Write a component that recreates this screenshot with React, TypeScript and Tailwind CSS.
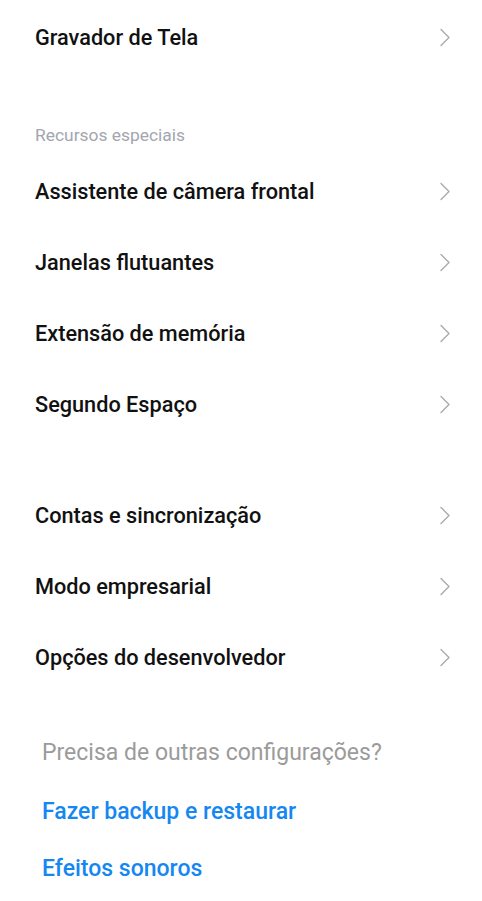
import React from 'react';

const Chevron: React.FC = () => (
  <svg width="12" height="19" viewBox="0 0 12 19" fill="none" className="shrink-0">
    <path d="M2 1.5 L10 9.5 L2 17.5" stroke="#ababab" strokeWidth="1.4" strokeLinecap="round" strokeLinejoin="round" />
  </svg>
);

const Row: React.FC<{ label: string }> = ({ label }) => (
  <div className="flex items-center justify-between h-[71px] pl-[35px] pr-[31px]">
    <span className="text-[21.7px] leading-[28px] font-medium text-[#111]">{label}</span>
    <Chevron />
  </div>
);

const App: React.FC = () => {
  return (
    <div
      className="w-[482px] h-[901px] bg-white overflow-hidden"
      style={{ fontFamily: 'Roboto, "Noto Sans", sans-serif' }}
    >
      <div className="pt-[2px]">
        <Row label="Gravador de Tela" />
      </div>

      <div className="pt-[51px] pl-[35px] h-[83px]">
        <span className="block text-[17.4px] leading-[22px] text-[#a3a5b0]">Recursos especiais</span>
      </div>

      <Row label="Assistente de câmera frontal" />
      <Row label="Janelas flutuantes" />
      <Row label="Extensão de memória" />
      <Row label="Segundo Espaço" />

      <div className="h-[40px]" />

      <Row label="Contas e sincronização" />
      <Row label="Modo empresarial" />
      <Row label="Opções do desenvolvedor" />

      <div className="pl-[42px] pt-[46px] flex flex-col">
        <span className="text-[23px] leading-[28px] text-[#9b9b9b]">Precisa de outras configurações?</span>
        <span className="mt-[31px] text-[23px] leading-[28px] font-medium text-[#1487f2]">Fazer backup e restaurar</span>
        <span className="mt-[29px] text-[23px] leading-[28px] font-medium text-[#1487f2]">Efeitos sonoros</span>
      </div>
    </div>
  );
};

export default App;
